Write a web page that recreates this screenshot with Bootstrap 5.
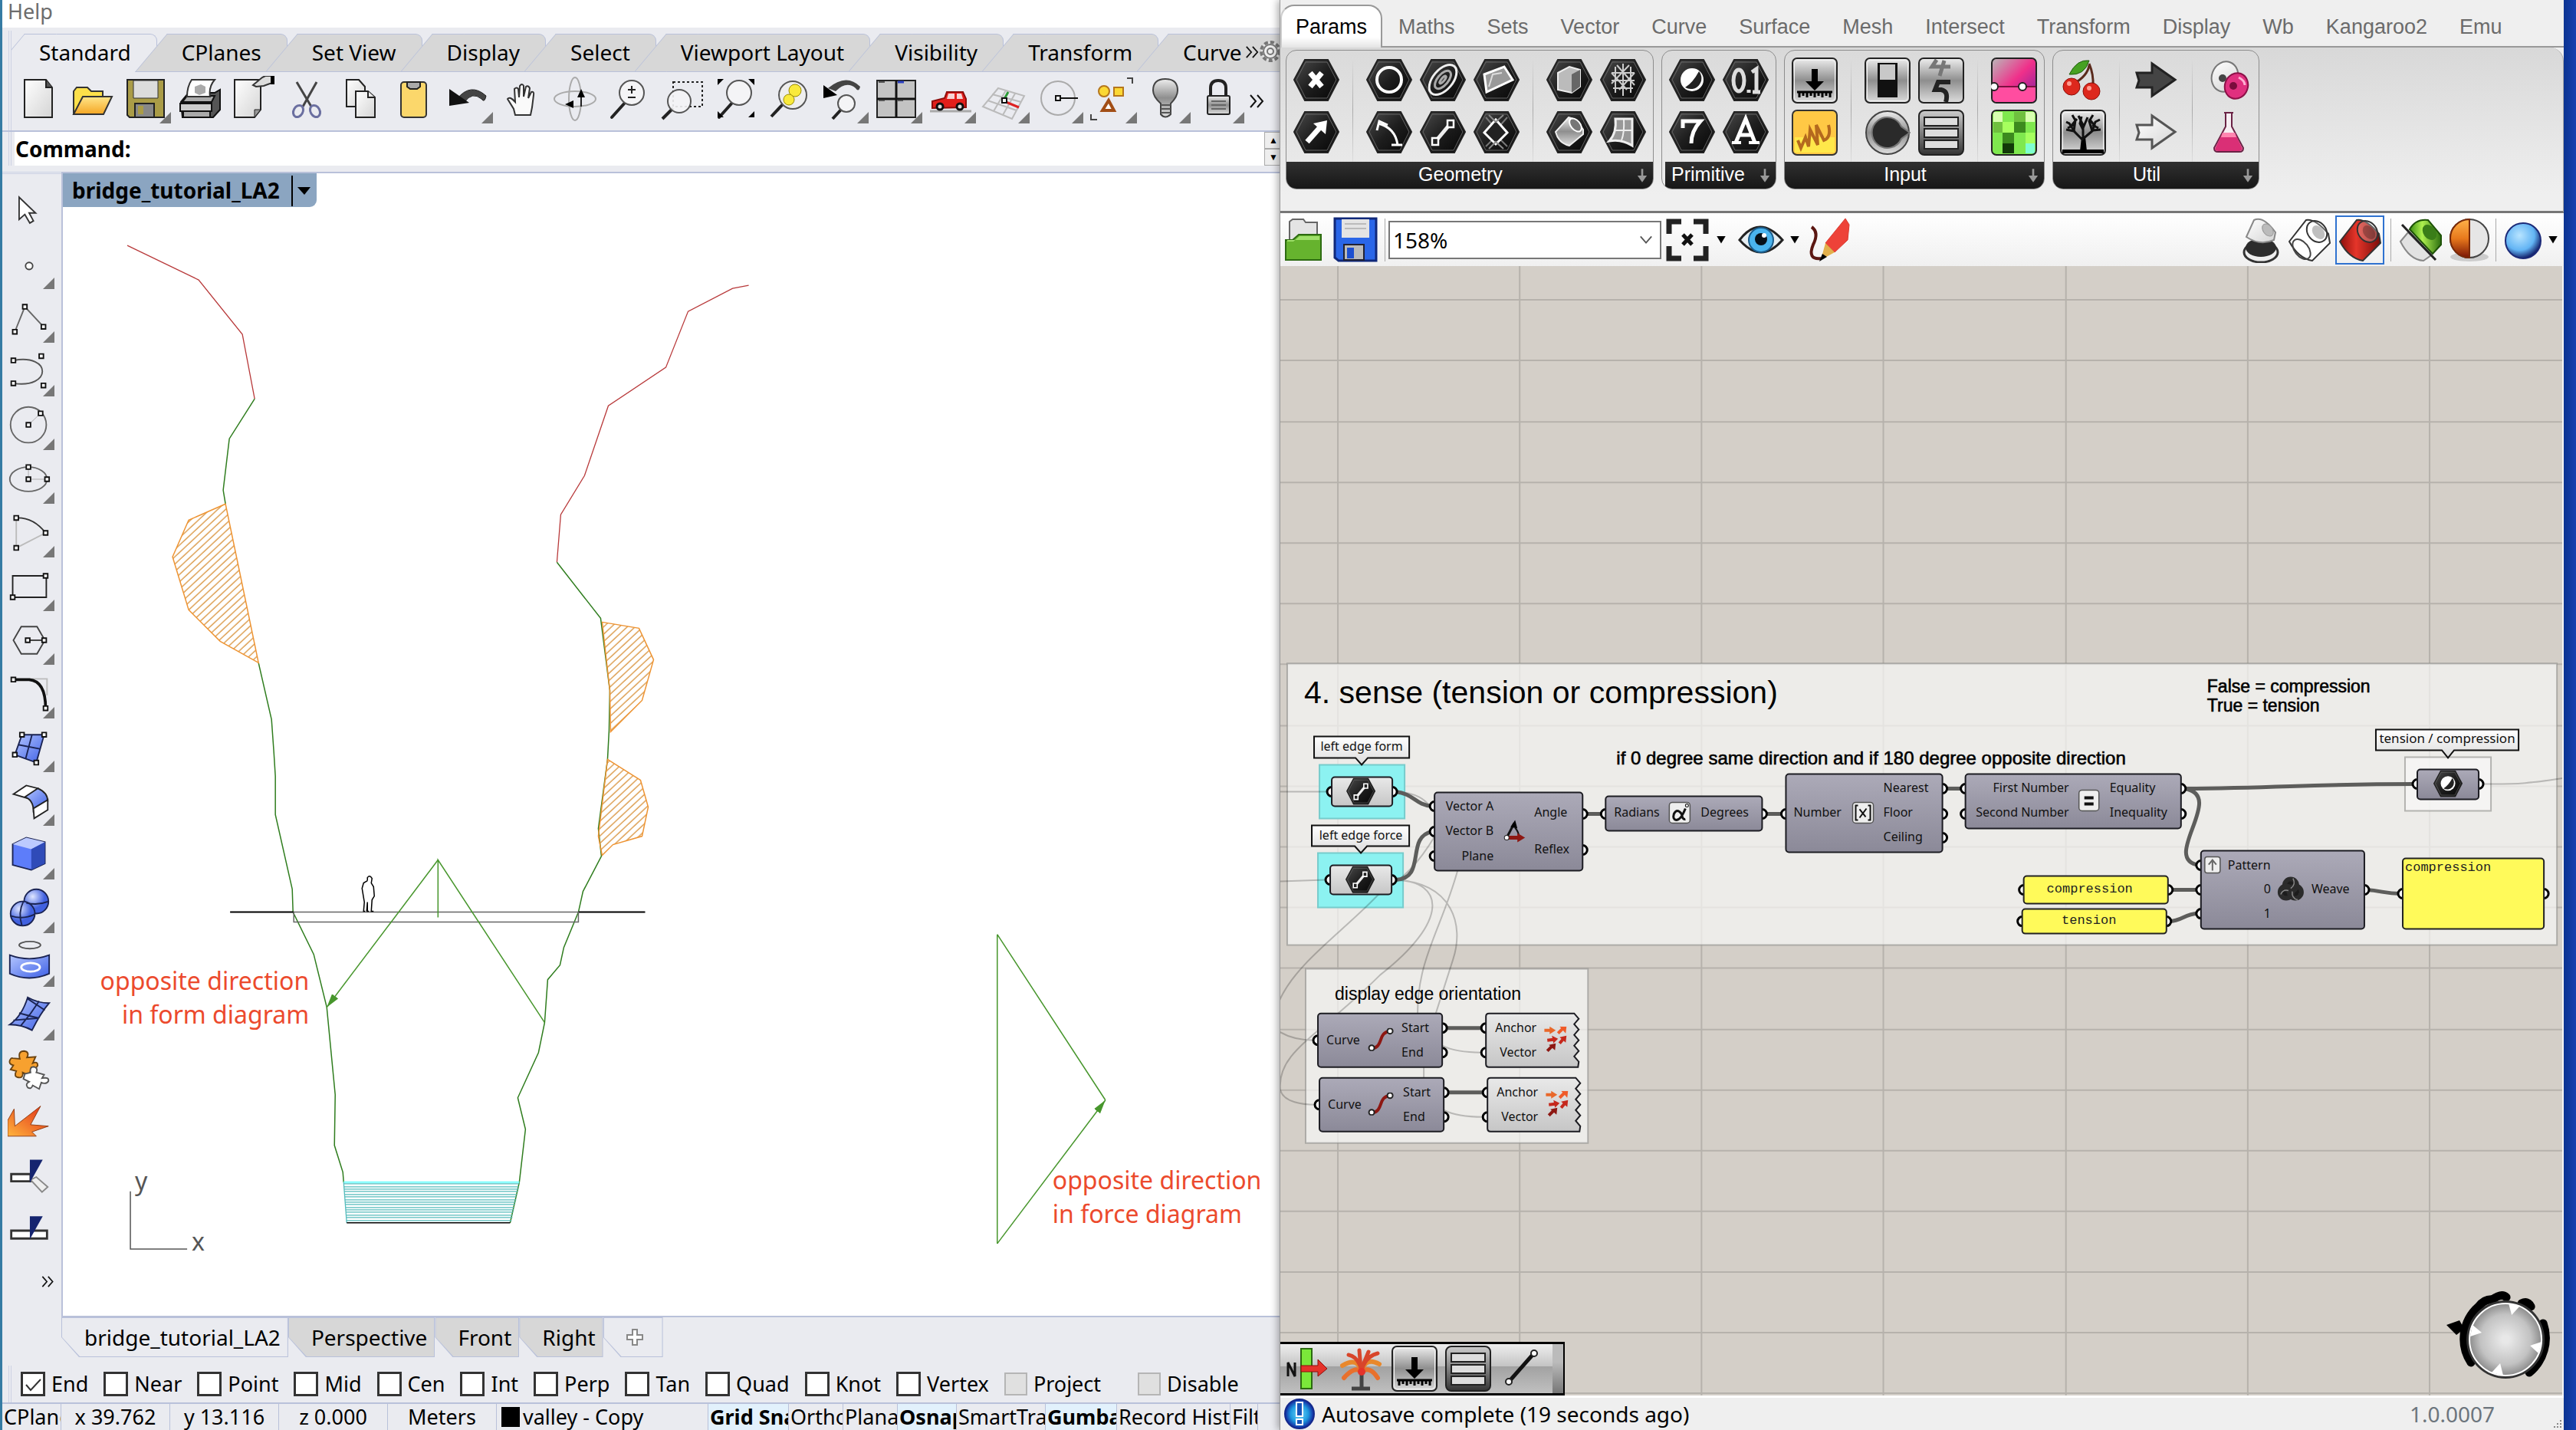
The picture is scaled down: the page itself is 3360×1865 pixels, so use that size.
<!DOCTYPE html>
<html lang="en">
<head>
<meta charset="utf-8">
<meta name="viewport" content="width=device-width, initial-scale=1">
<title>bridge_tutorial_LA2</title>
<link href="https://cdn.jsdelivr.net/npm/bootstrap@5.3.0/dist/css/bootstrap.min.css" rel="stylesheet">
<style>
:root{--pane:#eaebf0;--edge:#b9c1da;--tabgray:#d7d7d7}
body{font-family:"Noto Sans",sans-serif;font-size:27px;line-height:36px;color:#000;background:#fff}
button{font:inherit;color:inherit;background:none;border:0;padding:0}
svg{display:block}
.lhs{flex:1668 1 0;min-width:0;background:var(--pane);border-left:3px solid #357ba3}
.rhs{flex:1676 1 0;min-width:0;background:#efefef;z-index:2;box-shadow:-3px 0 9px rgba(0,0,0,.3);border-left:1px solid #999}
.desk{flex:0 0 16px;background:linear-gradient(90deg,#0b3391,#1741b0);z-index:3}
.menubar{height:36px;color:#6d6d6d;line-height:30px;padding-left:7px}
.menubar a{display:inline-block;height:36px}
.grip{width:4px;border:solid #ccd2e4;border-width:0 1px;margin-left:8px}
/* toolbar group tabs */
.grouptab{position:relative;z-index:0;height:50px;font-size:28px;margin-left:13px;padding:0 33px 2px 19px;white-space:nowrap;background:var(--tabgray);border:solid var(--edge);border-width:1px 1px 1px 0;border-radius:0 9px 0 0}
.grouptab::before{content:"";position:absolute;z-index:-1;left:-21px;top:-1px;bottom:-1px;width:42px;transform:skewX(-40deg);background:var(--tabgray);border:solid var(--edge);border-width:1px 0 1px 1px}
.grouptab.on{margin-left:17px}
.grouptab.on,.grouptab.on::before{background:var(--pane);border-bottom-color:var(--pane)}
.toolrow{height:76px}
.tool{position:relative;flex:0 0 70px;height:70px;display:flex;align-items:center;justify-content:center}
.tool svg{width:60px;height:60px}
.more::after{content:"";position:absolute;right:2px;bottom:3px;width:15px;height:15px;background:#777;clip-path:polygon(100% 0,100% 100%,0 100%)}
.cmd{height:46px;border-top:2px solid var(--edge)}
.cmd label{background:#fff;font-weight:700;padding:1px 0 0 1px;line-height:43px;font-size:28px}
.cmd input{border:0;outline:0;min-width:0}
.spin{width:20px}
.spin button{width:24px;height:22px;border:1px solid #aaa;background:#eee;font-size:12px;line-height:18px}
.side{width:77px;border-top:3px double #ccd2e4;padding-top:13px}
.side .tool{margin-right:7px}
.side .tool svg{width:56px;height:56px}
.view{border:solid var(--edge);border-width:2px 0 2px 2px;background:#fff}
.vtitle{position:absolute;left:0;top:0;height:44px;background:#8ba5c1;font-weight:700;border-radius:0 0 9px 0;font-size:28px;padding-left:12px}
.vtitle span+span{border-left:2px solid #000;margin:3px 0 1px 15px;padding:0 8px 0 6px}
.vtabs{padding-left:77px}
.vtab{height:52px;font-size:28px;position:relative;z-index:0;padding:0 10px 0 30px;background:var(--edge);clip-path:polygon(0 0,100% 0,100% 100%,23px 100%,0 26px)}
.vtab::before{content:"";position:absolute;z-index:-1;inset:1px;background:var(--tabgray);clip-path:polygon(0 0,100% 0,100% 100%,23px 100%,0 25px)}
.vtab.on::before{background:var(--pane)}
.snaps{height:59px;padding-top:11px}
.snaps .form-check-input{width:32px;height:32px;margin:0 8px 0 0;border:3px solid #333;border-radius:0;background-color:#fff;box-shadow:none;flex:none}
.snaps .form-check-input:checked{background-image:url("data:image/svg+xml,%3Csvg xmlns='http://www.w3.org/2000/svg' viewBox='0 0 26 26'%3E%3Cpath d='M4 14l6 7L23 7' fill='none' stroke='%23333' stroke-width='2'/%3E%3C/svg%3E")}
.snaps .form-check-input:disabled{width:30px;height:30px;border:2px solid #b5b5b5;background:#e0e0e0;opacity:1}
.snaps label{line-height:34px;margin-right:20px;opacity:1!important}
.stat{height:36px;border-top:2px solid var(--edge)}
.stat>*{overflow:hidden;white-space:nowrap;border-right:1px solid var(--edge);height:34px;line-height:34px;min-width:0;flex:none;padding:0 2px;text-align:left}
.stat .w1{width:142px;text-align:center;padding:0}
.stat .w2{width:276px}.stat .w3{width:105px}.stat .w4{width:71px}.stat .w5{width:77px}.stat .w6{width:116px}.stat .w7{width:93px}.stat .w8{width:148px}.stat .w9{width:36px}
.stat .lit{background:#e2f1fc;font-weight:700}
/* component ribbon */
.rib{font-family:"Liberation Sans",Arial,sans-serif;font-size:27px}
.rtabs{height:56px;margin-top:6px}
.rtabs button{padding:3px 21px 0;color:#6b6b6b;border-bottom:2px solid #999}
.rtabs .on{background:linear-gradient(#fff 75%,#e4e4e4);color:#000;border:2px solid #999;border-bottom:0;border-left-color:#ccc;border-radius:18px 18px 0 0;padding:0 18px}
.rbody{height:216px;background:linear-gradient(#d8d8d8,#efefef 90%);border-bottom:3px solid #777;border-right:1px solid #aaa;border-radius:0 18px 0 0;padding:3px 9px 0 7px;gap:10px}
.grp{border:1px solid #8d8d8d;border-radius:14px;height:182px;overflow:hidden;background:linear-gradient(#dadada,#ececec)}
.grp .cells{height:145px;padding:9px 9px 0;gap:10px}
.grp .cells svg{width:60px;height:60px}
.grp .rule{width:1px;margin:0 7px;background:linear-gradient(#ddd,#aaa,#ddd)}
.grp .foot{height:36px;background:linear-gradient(#303030,#161616);color:#fff;font-size:25px;line-height:32px;position:relative}
.grp .foot svg{position:absolute;right:7px;top:9px;width:14px;height:18px}
.bar{height:69px;background:linear-gradient(#fff,#f0f0f0)}
.bar button svg{width:60px;height:60px}
.bar .drop{width:12px;height:10px;background:#000;clip-path:polygon(0 0,100% 0,50% 100%)}
.bar .rule{width:1px;height:56px;background:#aaa}
.bar select{width:356px;height:50px;border:2px solid #777;border-radius:0;background:#fff;appearance:none;padding-left:4px;font-size:28px;line-height:44px}
.pickzoom svg{position:absolute;right:11px;top:18px;width:18px;height:13px}
.sel{border:2px solid #2f72d0;height:64px}
.canvas{background:#d4cfc8;min-height:0;border-right:2px solid #f4f4f4}
.dock{position:absolute;left:0;bottom:0;height:70px;border:solid #000;border-width:3px 2px 3px 0;background:linear-gradient(#eee,#c4c4c4 45%,#a2a2a2 46%,#c0c0c0);padding:0 0 0 5px;gap:10px}
.dock svg{width:60px;height:60px}
.dock .hold{width:14px;background:linear-gradient(#bbb 36%,#777)}
.foots{height:45px;border-top:3px solid #fff;font-size:28px}
svg .seg{font-family:"Noto Sans",sans-serif;font-size:16px;fill:#111}
svg .ari{font-family:"Liberation Sans",Arial,sans-serif;font-size:23px;fill:#000}
svg .mono{font-family:"Liberation Mono",monospace;font-size:17px;fill:#222}
svg .big{font-size:41px}
svg .wide{font-size:24px}
svg .s17{font-size:17px}
svg .emph{stroke:#000;stroke-width:.6}
svg .note{font-size:32px;fill:#ec4a2d}
svg .end{text-anchor:end}
svg .mid{text-anchor:middle}
.port{fill:#fff;stroke:#000;stroke-width:3}
.comp{fill:url(#gNode);stroke:#1c1c22;stroke-width:2}
.pale{fill:url(#gPale);stroke:#1c1c22;stroke-width:2}
.memo{fill:#fffa5a;stroke:#222;stroke-width:2}
.tag{fill:url(#gTag);stroke:#111;stroke-width:2}
.wire{fill:none;stroke:#5d5d5b;stroke-width:5}
.thin{fill:none;stroke:#000;stroke-opacity:.22;stroke-width:2}
</style>
<script src="https://cdn.jsdelivr.net/npm/bootstrap@5.3.0/dist/js/bootstrap.bundle.min.js"></script>
</head>
<body class="vh-100 d-flex overflow-hidden">
<svg width="0" height="0" class="position-absolute" aria-hidden="true">
<defs>
<linearGradient id="gNode" x2="0" y2="1"><stop stop-color="#acaab8"/><stop offset="1" stop-color="#8b8998"/></linearGradient>
<linearGradient id="gPale" x2="0" y2="1"><stop stop-color="#e9e9e9"/><stop offset="1" stop-color="#c6c6c6"/></linearGradient>
<linearGradient id="gTag" x2="0" y2="1"><stop stop-color="#fff"/><stop offset="1" stop-color="#dcdcdc"/></linearGradient>
<linearGradient id="gPaper" x2="1" y2="1"><stop stop-color="#fff"/><stop offset="1" stop-color="#d4d4d4"/></linearGradient>
<linearGradient id="gBlk" x2="1" y2="1"><stop stop-color="#4c4c4c"/><stop offset=".5" stop-color="#1e1e1e"/><stop offset="1" stop-color="#050505"/></linearGradient>
<linearGradient id="gMet" x2="0" y2="1"><stop stop-color="#eee"/><stop offset=".5" stop-color="#8e8e8e"/><stop offset="1" stop-color="#ddd"/></linearGradient>
<linearGradient id="gDark" x2="0" y2="1"><stop stop-color="#ccc"/><stop offset="1" stop-color="#333"/></linearGradient>
<linearGradient id="gYel" x2="0" y2="1"><stop stop-color="#ffe68a"/><stop offset="1" stop-color="#f5a623"/></linearGradient>
<linearGradient id="gBlu" x2="1" y2="1"><stop stop-color="#b4c6ff"/><stop offset="1" stop-color="#3e60e6"/></linearGradient>
<linearGradient id="gRed" x2="1"><stop stop-color="#8c0f0c"/><stop offset=".4" stop-color="#e5352a"/><stop offset="1" stop-color="#7a0c0a"/></linearGradient>
<linearGradient id="gGrn" x2="1"><stop stop-color="#3b8f12"/><stop offset=".4" stop-color="#aef04f"/><stop offset="1" stop-color="#2d6f10"/></linearGradient>
<linearGradient id="gFire" x1="0" y1="1" x2="1" y2="0"><stop stop-color="#ffb43c"/><stop offset="1" stop-color="#e02a17"/></linearGradient>
<linearGradient id="gHalf" x2="0" y2="1"><stop stop-color="#ffb24a"/><stop offset=".5" stop-color="#e8791c"/><stop offset="1" stop-color="#7a1505"/></linearGradient>
<radialGradient id="gSph" cx=".35" cy=".3"><stop stop-color="#dfe6ff"/><stop offset="1" stop-color="#4161e0"/></radialGradient>
<radialGradient id="gSky" cx=".4" cy=".35" r=".65"><stop stop-color="#b8e4ff"/><stop offset=".65" stop-color="#62b4f4"/><stop offset="1" stop-color="#14246e"/></radialGradient>
<radialGradient id="gDial"><stop offset=".1" stop-color="#e8e8e8"/><stop offset=".7" stop-color="#c2c2c2"/><stop offset="1" stop-color="#8c8c8c"/></radialGradient>
<radialGradient id="gInfo"><stop stop-color="#6fd6f8"/><stop offset=".6" stop-color="#1f9be0"/><stop offset="1" stop-color="#13239c"/></radialGradient>
<linearGradient id="gPink" x2="1" y2="1"><stop stop-color="#b9b9b9"/><stop offset=".5" stop-color="#f0308a"/><stop offset="1" stop-color="#7b1fa2"/></linearGradient>
<pattern id="hatchA" width="8" height="7" patternUnits="userSpaceOnUse" patternTransform="rotate(-43)"><path d="M0 1h8" stroke="#d8913a" stroke-width="1.3"/></pattern>
<marker id="tip" markerWidth="20" markerHeight="12" refX="18" refY="6" orient="auto" markerUnits="userSpaceOnUse"><path d="M0 1L18 6L0 11z" fill="#47962c"/></marker>
<symbol id="hex" viewBox="0 0 60 60"><path d="M15 3H45L59 29L45 56H15L1 29z" fill="url(#gBlk)" stroke="#222" stroke-width="2"/><path d="M16 6H44L56 29L44 53H16L4 29z" fill="none" stroke="#666"/></symbol>
<symbol id="boxm" viewBox="0 0 60 60"><rect x="1" y="1" width="58" height="58" rx="6" fill="url(#gMet)" stroke="#222" stroke-width="2"/><rect x="3.500" y="3.500" width="53" height="53" rx="4" fill="none" stroke="#f4f4f4"/></symbol>
<symbol id="slider" viewBox="0 0 60 60"><use href="#boxm"/><path d="M26 15h8v16h8L30 43L18 31h8z"/><path d="M7 45H53M10 45v7M15 45v5M20 45v7M25 45v5M30 45v7M35 45v5M40 45v7M45 45v5M50 45v7" stroke="#000" stroke-width="3"/></symbol>
<symbol id="vlist" viewBox="0 0 60 60"><rect x="1" y="1" width="58" height="58" rx="7" fill="url(#gDark)" stroke="#222" stroke-width="2"/><g fill="#ddd" stroke="#222" stroke-width="2"><rect x="8" y="10" width="44" height="11"/><rect x="8" y="25" width="44" height="11"/><rect x="8" y="40" width="44" height="11"/></g></symbol>
<symbol id="lens" viewBox="0 0 60 60"><path d="M26 34L8 54" stroke="#222" stroke-width="4" stroke-linecap="round"/><circle cx="34" cy="22" r="16" fill="#f4f4f6" stroke="#555" stroke-width="2"/></symbol>
<symbol id="dn" viewBox="0 0 16 20"><path d="M8 0v15" stroke="#999" stroke-width="3"/><path d="M1 10H15L8 20z" fill="#999"/></symbol>
<symbol id="chev" viewBox="0 0 20 18"><path d="M2 1L9 9L2 17M11 1L18 9L11 17" fill="none" stroke="#111" stroke-width="2"/></symbol>
<symbol id="lineic" viewBox="0 0 60 60"><use href="#hex"/><path d="M20 42L40 18" stroke="#eee" stroke-width="5"/><path d="M16 37h8v9h-8zM36 14h8v9h-8z" fill="#222" stroke="#fff" stroke-width="2.500"/></symbol>
<symbol id="boolic" viewBox="0 0 60 60"><use href="#hex"/><circle cx="30" cy="29" r="15" fill="#fff"/><path d="M39 18A14 14 0 0 1 21 39q10-6 18-21z" fill="#222"/></symbol>
<symbol id="cyl" viewBox="0 0 60 60"><path d="M26 4Q38 2 55 22L57 34L34 57Q16 54 4 32z" stroke="#333" stroke-width="2"/><ellipse cx="40" cy="19" rx="12" ry="15" transform="rotate(-38 40 19)" fill="#fff" fill-opacity=".25" stroke="#333" stroke-width="2"/><ellipse cx="42" cy="20" rx="7" ry="10" transform="rotate(-38 42 20)" fill="#000" fill-opacity=".25"/></symbol>
<symbol id="curveic" viewBox="0 0 34 30"><path d="M5 27C22 24 12 6 29 4" fill="none" stroke="#8d1712" stroke-width="4"/><circle cx="5" cy="26" r="3.500" fill="#fff" stroke="#222" stroke-width="2"/><circle cx="29" cy="4" r="3.500" fill="#fff" stroke="#222" stroke-width="2"/></symbol>
<symbol id="vecic" viewBox="0 0 34 36"><g stroke-width="4" fill="none"><path d="M0 5h8" stroke="#e9682a"/><path d="M18 9l6-6" stroke="#f05a28"/><path d="M4 18l8-1M20 22l5-6" stroke="#c5281c"/><path d="M4 32l6-6" stroke="#8d1712"/></g><path d="M7 0l8 5l-8 5z" fill="#e9682a"/><path d="M20 0h9l-1 9z" fill="#f05a28"/><path d="M10 12l8 4l-6 6zM20 14l9-2l-1 9z" fill="#c5281c"/><path d="M6 24l9-2l-1 9z" fill="#8d1712"/></symbol>
</defs></svg>

<!-- modelling window -->
<main class="lhs d-flex flex-column overflow-hidden">
<nav class="menubar bg-white"><a href="#" class="text-reset text-decoration-none">Help</a></nav>
<div class="d-flex pt-1">
<div class="grip"></div>
<div class="flex-grow-1 overflow-hidden">
<div class="d-flex pt-1 position-relative">
<button class="grouptab on">Standard</button><button class="grouptab">CPlanes</button><button class="grouptab">Set View</button><button class="grouptab">Display</button><button class="grouptab">Select</button><button class="grouptab">Viewport Layout</button><button class="grouptab">Visibility</button><button class="grouptab">Transform</button><button class="grouptab pe-0 border-end-0 rounded-0 flex-grow-1 d-flex align-items-center">Curve<svg class="ms-1" width="18" height="18"><use href="#chev"/></svg></button>
<svg class="position-absolute end-0 top-50 translate-middle-y" width="29" height="34" viewBox="0 0 29 34"><circle cx="17" cy="17" r="12" fill="#e4e4e4" stroke="#777" stroke-width="4" stroke-dasharray="5 3"/><circle cx="17" cy="17" r="9" fill="#eee" stroke="#777" stroke-width="2"/><circle cx="17" cy="17" r="4" fill="none" stroke="#777" stroke-width="2"/></svg>
</div>
<div class="toolrow d-flex">
<button class="tool" aria-label="New"><svg viewBox="0 0 60 60"><path d="M12 5H40L48 15V54H12z" fill="url(#gPaper)" stroke="#222" stroke-width="2"/><path d="M40 5V15H48" fill="#555" stroke="#222" stroke-width="2"/></svg></button>
<button class="tool" aria-label="Open"><svg viewBox="0 0 60 60"><path d="M6 20L10 15H24L29 20H44V30H18L8 50H6z" fill="#fde04a" stroke="#333" stroke-width="2"/><path d="M18 27H56L45 50H6z" fill="url(#gYel)" stroke="#333" stroke-width="2"/></svg></button>
<button class="tool more" aria-label="Save"><svg viewBox="0 0 60 60"><path d="M6 5H54V54H9L6 51z" fill="#aa9c47" stroke="#222" stroke-width="2"/><path d="M14 6H46V29H14z" fill="#dcdcdc" stroke="#333"/><path d="M16 36H41V54H16z" fill="#888" stroke="#222" stroke-width="2"/><path d="M20 39h7v11h-7z" fill="#aa9c47"/></svg></button>
<button class="tool" aria-label="Print"><svg viewBox="0 0 60 60"><path d="M6 34L16 22H50L57 18V44L48 54H8z" fill="#555" stroke="#111" stroke-width="2"/><path d="M5 36H46V46H5z" fill="#ccc" stroke="#111" stroke-width="2"/><path d="M9 46H44V54H9zM14 26H50L46 34H8z" fill="#aaa" stroke="#111" stroke-width="2"/><path d="M20 5H50Q42 14 44 27H14Q14 14 20 5z" fill="#fff" stroke="#333" stroke-width="2"/><path d="M24 14l8-3l6 3v8l-8 3l-6-3z" fill="#aaa"/></svg></button>
<button class="tool" aria-label="Document properties"><svg viewBox="0 0 60 60"><path d="M6 5H40V44L32 54H6z" fill="url(#gPaper)" stroke="#222" stroke-width="2"/><path d="M32 54V44H40z" fill="#999" stroke="#222"/><path d="M30 12L42 2L46 0H57V10H52L44 13L34 14z" fill="#ddd" stroke="#333" stroke-width="2"/><path d="M53 0h5v11h-5z"/></svg></button>
<button class="tool" aria-label="Cut"><svg viewBox="0 0 60 60"><path d="M17 8L36 40M43 8L25 40" stroke="#444" stroke-width="3"/><g fill="none" stroke="#6b6fa0" stroke-width="3"><ellipse cx="19" cy="46" rx="6" ry="8" transform="rotate(30 19 46)"/><ellipse cx="41" cy="46" rx="6" ry="8" transform="rotate(-30 41 46)"/></g></svg></button>
<button class="tool" aria-label="Copy"><svg viewBox="0 0 60 60"><g fill="url(#gPaper)" stroke="#222" stroke-width="2"><path d="M12 5H28L36 14V40H12z"/><path d="M24 20H40L49 28V54H24z"/><path d="M40 20V28H49"/></g></svg></button>
<button class="tool" aria-label="Paste"><svg viewBox="0 0 60 60"><rect x="13" y="8" width="33" height="46" rx="4" fill="#fbd76b" stroke="#333" stroke-width="2"/><path d="M21 8H38V14L34 17H25L21 14z" fill="#aaa" stroke="#222" stroke-width="2"/></svg></button>
<button class="tool more" aria-label="Undo"><svg viewBox="0 0 60 60"><path d="M16 30Q34 8 54 26Q52 36 48 30Q36 20 26 34z" fill="#444" stroke="#222"/><path d="M6 17L6 39L32 35z" fill="#111"/></svg></button>
<button class="tool" aria-label="Pan"><svg viewBox="0 0 60 60"><path d="M22 51L20 43L12 30Q15 26 22 34L21 17Q24 14 26 17L27 28L28 13Q31 9 33 13L33 27L36 14Q39 12 41 16L39 29L43 21Q47 20 46 25L44 41L42 51z" fill="#fafafa" stroke="#333" stroke-width="2"/></svg></button>
<button class="tool" aria-label="Rotate view"><svg viewBox="0 0 60 60"><g fill="none" stroke="#aaa" stroke-width="2"><ellipse cx="30" cy="30" rx="27" ry="10"/><ellipse cx="30" cy="30" rx="8" ry="28"/></g><path d="M38 40V26" stroke="#222" stroke-width="2"/><path d="M33 28l5-11l5 11zM28 32V42L17 37z"/></svg></button>
<button class="tool" aria-label="Zoom dynamic"><svg viewBox="0 0 60 60"><use href="#lens"/><path d="M34 13V23M29 18H39M29 28H39" stroke="#222" stroke-width="2"/></svg></button>
<button class="tool" aria-label="Zoom window"><svg viewBox="0 0 60 60"><path d="M18 8H56V40H18z" fill="none" stroke="#222" stroke-width="2" stroke-dasharray="3 3"/><path d="M18 42L4 56" stroke="#222" stroke-width="4"/><circle cx="26" cy="33" r="15" fill="#f4f4f6" fill-opacity=".9" stroke="#555" stroke-width="2"/></svg></button>
<button class="tool" aria-label="Zoom extents"><svg viewBox="0 0 60 60"><use href="#lens"/><path d="M6 4h8l-8 8zM54 4v8l-8-8zM6 54v-8l8 8zM54 54h-8l8-8z"/></svg></button>
<button class="tool" aria-label="Zoom selected"><svg viewBox="0 0 60 60"><path d="M22 36L6 53" stroke="#222" stroke-width="4"/><circle cx="34" cy="25" r="18" fill="#eee" stroke="#555" stroke-width="2"/><circle cx="37" cy="19" r="8" fill="#f9ea3c" stroke="#998a00"/><circle cx="29" cy="31" r="7" fill="#f9ea3c" stroke="#998a00"/></svg></button>
<button class="tool more" aria-label="Undo view"><svg viewBox="0 0 60 60"><path d="M10 16Q34-4 52 14Q50 22 46 16Q34 6 20 20z" fill="#444"/><path d="M4 12L4 29L22 25z"/><path d="M27 44L16 56" stroke="#222" stroke-width="4"/><circle cx="34" cy="36" r="11" fill="#f4f4f6" stroke="#555" stroke-width="2"/></svg></button>
<button class="tool more" aria-label="Four views"><svg viewBox="0 0 60 60"><path d="M4 6H54V54H4z" fill="#c3c3c3" stroke="#222" stroke-width="2"/><path d="M29 6V54M4 30H54" stroke="#111" stroke-width="3"/><path d="M6 8h8M30 32h8M6 32h8" stroke="#555" stroke-width="2"/><path d="M31 8h8" stroke="#2a3fc0" stroke-width="3"/></svg></button>
<button class="tool more" aria-label="Set view"><svg viewBox="0 0 60 60"><path d="M3 46H57" stroke="#aaa" stroke-width="3"/><path d="M6 42V33L22 29L25 21H46L50 30V41z" fill="#e31f1b" stroke="#8e0d0b" stroke-width="2"/><path d="M27 23H35V30H25zM38 23H44L46 30H38z" fill="#f6d5d5"/><g fill="#ddd" stroke="#111" stroke-width="3"><circle cx="16" cy="40" r="4"/><circle cx="42" cy="40" r="4"/></g></svg></button>
<button class="tool more" aria-label="CPlane"><svg viewBox="0 0 60 60"><path d="M22 16L56 26L40 56L2 40zM14 24L52 34M8 32L46 45M32 19L16 46M44 23L28 51" fill="none" stroke="#bbb" stroke-width="2"/><path d="M30 30L35 21" stroke="#2a9a35" stroke-width="3"/><path d="M32 34L49 41" stroke="#d22" stroke-width="3"/><path d="M27 29h6v6h-6z" fill="#fff" stroke="#111" stroke-width="2"/></svg></button>
<button class="tool more" aria-label="Object snap"><svg viewBox="0 0 60 60"><circle cx="30" cy="29" r="22" fill="none" stroke="#aaa" stroke-width="2"/><path d="M30 29H56" stroke="#111" stroke-width="2"/><path d="M27 26h6v6h-6z" fill="#fff" stroke="#111" stroke-width="2"/></svg></button>
<button class="tool more" aria-label="Select"><svg viewBox="0 0 60 60"><path d="M50 3h7v7M3 50v7h8" fill="none" stroke="#444" stroke-width="2"/><circle cx="20" cy="20" r="7" fill="#fbd834" stroke="#b5761c" stroke-width="2"/><path d="M33 15H45V26H33z" fill="#fbd834" stroke="#b5761c" stroke-width="2"/><path d="M26 32L33 45H18z" fill="#fff" stroke="#a24e16" stroke-width="4"/></svg></button>
<button class="tool more" aria-label="Hide"><svg viewBox="0 0 60 60"><path d="M30 4Q46 4 46 19Q46 27 37 36V50Q30 57 24 50V36Q14 27 14 19Q14 4 30 4z" fill="url(#gMet)" stroke="#444" stroke-width="2"/><path d="M24 38h13M24 43h13M24 48h13" stroke="#555" stroke-width="2"/></svg></button>
<button class="tool more" aria-label="Lock"><svg viewBox="0 0 60 60"><path d="M19 28V16Q19 6 29 6Q39 6 39 16V28" fill="none" stroke="#222" stroke-width="4"/><rect x="15" y="26" width="29" height="24" rx="2" fill="url(#gMet)" stroke="#222" stroke-width="2"/><path d="M20 33H39M20 38H39M20 43H39" stroke="#666" stroke-width="2"/></svg></button>
<button class="ps-1" aria-label="More tools"><svg width="20" height="18"><use href="#chev"/></svg></button>
</div></div></div>
<div class="cmd d-flex">
<div class="grip me-1"></div>
<label for="cmd">Command:</label><input id="cmd" class="flex-grow-1 bg-white">
<div class="spin bg-white d-flex flex-column overflow-hidden flex-shrink-0"><button aria-label="Up">▲</button><button aria-label="Down">▼</button></div>
</div>
<div class="d-flex flex-grow-1 pt-2 overflow-hidden">
<div class="side d-flex flex-column flex-shrink-0">
<button class="tool" aria-label="Pointer"><svg viewBox="0 0 60 60"><path d="M16 11V42L24 35L31 47L36 44L30 33H39z" fill="#fff" stroke="#333" stroke-width="2"/></svg></button>
<button class="tool more" aria-label="Point"><svg viewBox="0 0 60 60"><circle cx="30" cy="32" r="5" fill="#fff" stroke="#444" stroke-width="2"/></svg></button>
<button class="tool more" aria-label="Polyline"><svg viewBox="0 0 60 60"><path d="M10 49L24 14L50 42" fill="none" stroke="#666" stroke-width="2"/><path d="M7 46h6v6h-6zM21 11h6v6h-6zM47 39h6v6h-6z" fill="#fff" stroke="#111" stroke-width="2"/></svg></button>
<button class="tool more" aria-label="Curve"><svg viewBox="0 0 60 60"><path d="M8 14C62 4 62 54 8 46" fill="none" stroke="#555" stroke-width="2"/><path d="M5 11h6v6h-6zM5 43h6v6h-6zM44 5h6v6h-6zM47 46h6v6h-6z" fill="#fff" stroke="#111" stroke-width="2"/></svg></button>
<button class="tool more" aria-label="Circle"><svg viewBox="0 0 60 60"><circle cx="29" cy="29" r="25" fill="none" stroke="#666" stroke-width="2"/><path d="M29 29L46 13" stroke="#aaa"/><path d="M26 26h6v6h-6zM43 10h6v6h-6z" fill="#fff" stroke="#111" stroke-width="2"/></svg></button>
<button class="tool more" aria-label="Ellipse"><svg viewBox="0 0 60 60"><ellipse cx="29" cy="30" rx="26" ry="17" fill="none" stroke="#666" stroke-width="2"/><path d="M29 13V30H55" fill="none" stroke="#aaa"/><path d="M26 27h6v6h-6zM26 10h6v6h-6zM52 27h6v6h-6z" fill="#fff" stroke="#111" stroke-width="2"/></svg></button>
<button class="tool more" aria-label="Arc"><svg viewBox="0 0 60 60"><path d="M12 9V51L53 30" fill="none" stroke="#bbb" stroke-width="2"/><path d="M12 9Q36 8 53 30" fill="none" stroke="#333" stroke-width="2"/><path d="M9 6h6v6h-6zM9 48h6v6h-6zM50 27h6v6h-6z" fill="#fff" stroke="#111" stroke-width="2"/></svg></button>
<button class="tool more" aria-label="Rectangle"><svg viewBox="0 0 60 60"><path d="M7 15H54V45H7z" fill="none" stroke="#222" stroke-width="2"/><path d="M4 42h6v6h-6zM50 12h6v6h-6z" fill="#fff" stroke="#111" stroke-width="2"/></svg></button>
<button class="tool more" aria-label="Polygon"><svg viewBox="0 0 60 60"><path d="M19 11H41L52 30L41 49H19L8 30zM28 30H50" fill="none" stroke="#444" stroke-width="2"/><path d="M25 27h6v6h-6zM48 27h6v6h-6z" fill="#fff" stroke="#111" stroke-width="2"/></svg></button>
<button class="tool more" aria-label="Fillet"><svg viewBox="0 0 60 60"><path d="M30 9H55V32" fill="none" stroke="#bbb" stroke-width="2"/><path d="M8 10H30Q53 12 53 50" fill="none" stroke="#111" stroke-width="4"/><path d="M5 7h6v6h-6zM50 47h6v6h-6z" fill="#fff" stroke="#111" stroke-width="2"/></svg></button>
<button class="tool more" aria-label="Surface"><svg viewBox="0 0 60 60"><path d="M20 12H51L40 51L10 40zM34 12L25 46M15 26L46 32" fill="url(#gBlu)" stroke="#1a2352" stroke-width="2"/><path d="M17 9h6v6h-6zM48 9h6v6h-6zM37 48h6v6h-6zM7 37h6v6h-6z" fill="#fff" stroke="#111" stroke-width="2"/></svg></button>
<button class="tool more" aria-label="Blend surface"><svg viewBox="0 0 60 60"><path d="M8 20L26 8L42 12L28 26z" fill="#fff" stroke="#222" stroke-width="2"/><path d="M42 12Q56 18 56 30L36 44Q36 28 24 24z" fill="url(#gBlu)" stroke="#222" stroke-width="2"/><path d="M36 40L56 28V42L37 54z" fill="#fff" stroke="#222" stroke-width="2"/></svg></button>
<button class="tool more" aria-label="Box"><svg viewBox="0 0 60 60"><path d="M7 15L26 6L52 12V42L33 51L7 44z" fill="#5d7dfa" stroke="#1a2352" stroke-width="2"/><path d="M7 15L26 6L52 12L33 22z" fill="#bccaff"/><path d="M33 22L52 12V42L33 51z" fill="#2f4bb8"/></svg></button>
<button class="tool more" aria-label="Spheres"><svg viewBox="0 0 60 60"><g fill="url(#gSph)" stroke="#1a2352" stroke-width="2"><circle cx="40" cy="20" r="17"/><circle cx="21" cy="37" r="17"/></g><path d="M4 40Q21 46 38 38M22 20Q14 36 20 54M26 22Q42 26 57 20" fill="none" stroke="#1a2352" stroke-width="2"/></svg></button>
<button class="tool more" aria-label="Project"><svg viewBox="0 0 60 60"><ellipse cx="31" cy="6" rx="15" ry="5" fill="none" stroke="#555" stroke-width="2"/><path d="M3 20Q30 30 58 20V46Q30 58 3 46z" fill="url(#gBlu)" stroke="#1a2352" stroke-width="2"/><ellipse cx="32" cy="37" rx="13" ry="6" fill="none" stroke="#fff" stroke-width="3"/></svg></button>
<button class="tool more" aria-label="Mesh"><svg viewBox="0 0 60 60"><path d="M28 4Q42 12 58 12Q46 26 34 50Q20 42 3 42Q20 30 28 4zM16 26Q30 30 44 33M44 9Q32 28 18 44M8 36L44 33M28 6L52 22" fill="url(#gBlu)" stroke="#1a2352" stroke-width="2"/></svg></button>
<button class="tool" aria-label="Join"><svg viewBox="0 0 60 60"><path d="M7 14L17 15Q14 4 23 4Q31 5 27 13L39 12L35 21Q42 18 42 24Q40 30 33 27L30 38L21 34Q22 42 15 41Q8 40 12 32L4 30L8 24Q1 22 3 17Q5 13 7 14z" fill="#f7a12f" stroke="#6b4310" stroke-width="2"/><path d="M24 36L32 34Q30 26 37 26Q43 28 40 34L51 37L48 42Q58 40 57 46Q54 51 47 48L44 57L35 52Q33 58 28 55Q24 50 30 47L22 43z" fill="#fff" stroke="#555" stroke-width="2"/></svg></button>
<button class="tool" aria-label="Explode"><svg viewBox="0 0 60 60"><path d="M0 26L9 10L10 34L46 6L32 32L57 34L34 42L40 48H0z" fill="url(#gFire)" stroke="#8d3a10" stroke-width="1"/></svg></button>
<button class="tool" aria-label="Trim"><svg viewBox="0 0 60 60"><path d="M5 26H32V36H5z" fill="#fff" stroke="#333" stroke-width="3"/><path d="M32 34L40 30L56 44L48 51z" fill="#eee" stroke="#888" stroke-width="2"/><path d="M31 6H49L31 38z" fill="#15246f"/></svg></button>
<button class="tool" aria-label="Split"><svg viewBox="0 0 60 60"><path d="M5 30H55V41H5z" fill="#fff" stroke="#333" stroke-width="3"/><path d="M31 10H49L31 42z" fill="#15246f"/></svg></button>
<button class="align-self-end pe-2 pt-4" aria-label="More"><svg width="20" height="15"><use href="#chev"/></svg></button>
</div>
<section class="view position-relative flex-grow-1 overflow-hidden">
<svg width="100%" height="100%" viewBox="83 226 1586 1492" preserveAspectRatio="xMinYMin slice" fill="none">
<g stroke="#b8393a" stroke-width="1.300"><path d="M167 320L260 365L317 436L333 520M977 372L956 376L898 406L869 479L794 529L763 620L732 671L727 733"/></g>
<g stroke="#2f7d1e" stroke-width="1.500"><path d="M333 520L300 572L292 639L295 657M338 864L355 938L358 980L360 1012L360 1062L382 1159L383 1189L410 1244L427 1313L438 1427L437 1493L448 1528L449 1541M727 733L784 806L796 900L795 952L793 990L781 1080L785 1116L761 1162L755 1189L736 1235L731 1258L715 1277L711 1333L703 1372L676 1431L686 1472L678 1541L666 1594"/></g>
<g stroke="#ee9433" stroke-width="1.500" fill="url(#hatchA)"><path d="M295 657L247 678L226 726L247 795L288 836L338 864z"/><path d="M786 811L834 819L853 860L838 913L797 954L796 900z"/><path d="M793 990L836 1017L846 1052L838 1090L800 1101L786 1115L781 1090z"/></g>
<path d="M301 1189H384M755 1189H842" stroke="#000" stroke-width="2"/><path d="M384 1189H755V1202H384z" stroke="#666" stroke-width="1.500"/>
<g stroke="#47962c" stroke-width="1.500"><path d="M711 1333L572 1121V1196"/><path d="M572 1121L427 1313" marker-end="url(#tip)"/><path d="M1301 1218L1442 1434M1301 1218V1621"/><path d="M1301 1621L1442 1434" marker-end="url(#tip)"/></g>
<path d="M480 1148V1144Q483 1140 486 1145L485 1151L488 1156L489 1168L486 1173L485 1188H488M480 1148L475 1151L473 1158L476 1176L475 1188H477M479 1188L480 1176V1188H482" stroke="#000" stroke-width="1.500"/>
<path d="M449 1541H678" stroke="#7ff" stroke-width="2"/>
<path d="M449 1543H678M449 1547H677M450 1550H677M450 1553H676M450 1557H675M450 1560H674M450 1564H674M451 1567H673M451 1570H672M451 1574H671M451 1577H671M452 1580H670M452 1584H669M452 1587H669M452 1591H668M449 1541L453 1594" stroke="#55bcbc" stroke-width="1.300"/>
<path d="M453 1594H666" stroke="#000" stroke-width="1.500"/>
<path d="M171 1553V1628H245" stroke="#555" stroke-width="1.500"/>
<text x="177" y="1551" font-size="32" fill="#555">y</text><text x="251" y="1630" font-size="32" fill="#555">x</text>
<text class="note end" x="404" y="1290">opposite direction</text><text class="note end" x="404" y="1334">in form diagram</text>
<text class="note" x="1373" y="1550">opposite direction</text><text class="note" x="1373" y="1594">in force diagram</text>
</svg>
<button class="vtitle d-flex align-items-stretch"><span class="align-self-center">bridge_tutorial_LA2</span><span class="d-flex align-items-center"><svg width="17" height="10"><path d="M0 0H17L9 10z"/></svg></span></button>
</section>
</div>
<div class="vtabs d-flex flex-shrink-0">
<button class="vtab on">bridge_tutorial_LA2</button><button class="vtab">Perspective</button><button class="vtab">Front</button><button class="vtab">Right</button><button class="vtab on" aria-label="Add view"><svg width="22" height="22" viewBox="0 0 22 22" class="me-3"><path d="M8 1h6v7h7v6h-7v7H8v-7H1V8h7z" fill="#fff" stroke="#888" stroke-width="2"/></svg></button>
</div>
<div class="snaps d-flex align-items-center flex-shrink-0">
<div class="grip align-self-stretch me-1"></div><div class="ms-2 d-flex align-items-center">
<input class="form-check-input" type="checkbox" id="s1" checked><label for="s1">End</label>
<input class="form-check-input" type="checkbox" id="s2"><label for="s2">Near</label>
<input class="form-check-input" type="checkbox" id="s3"><label for="s3">Point</label>
<input class="form-check-input" type="checkbox" id="s4"><label for="s4">Mid</label>
<input class="form-check-input" type="checkbox" id="s5"><label for="s5">Cen</label>
<input class="form-check-input" type="checkbox" id="s6"><label for="s6">Int</label>
<input class="form-check-input" type="checkbox" id="s7"><label for="s7">Perp</label>
<input class="form-check-input" type="checkbox" id="s8"><label for="s8">Tan</label>
<input class="form-check-input" type="checkbox" id="s9"><label for="s9">Quad</label>
<input class="form-check-input" type="checkbox" id="s10"><label for="s10">Knot</label>
<input class="form-check-input" type="checkbox" id="s11"><label for="s11">Vertex</label>
<input class="form-check-input" type="checkbox" id="s12" disabled><label for="s12" class="me-5">Project</label>
<input class="form-check-input" type="checkbox" id="s13" disabled><label for="s13" class="m-0">Disable</label>
</div></div>
<div class="stat d-flex overflow-hidden flex-shrink-0">
<button class="w5">CPlane</button><span class="w1">x 39.762</span><span class="w1">y 13.116</span><span class="w1">z 0.000</span><button class="w1">Meters</button>
<button class="w2 d-flex align-items-center"><svg width="24" height="26" class="ms-1 me-1"><path d="M0 0h24v26H0z"/></svg>valley - Copy</button>
<button class="w3 lit">Grid Snap</button><button class="w4">Ortho</button><button class="w4">Planar</button><button class="w5 lit">Osnap</button><button class="w6">SmartTrack</button><button class="w7 lit">Gumball</button><button class="w8">Record History</button><button class="w9">Filter</button>
</div>
</main>

<!-- node editor window -->
<aside class="rhs d-flex flex-column overflow-hidden">
<div class="rib">
<div class="rtabs d-flex">
<button class="on">Params</button><button>Maths</button><button>Sets</button><button>Vector</button><button>Curve</button><button>Surface</button><button>Mesh</button><button>Intersect</button><button>Transform</button><button>Display</button><button>Wb</button><button>Kangaroo2</button><button class="flex-grow-1 text-start">Emu</button>
</div>
<div class="rbody d-flex">
<div class="grp"><div class="cells d-flex">
<div class="d-grid gap-2 align-content-start"><svg viewBox="0 0 60 60"><use href="#hex"/><path d="M22 20L37 38M37 20L22 38" stroke="#fff" stroke-width="7"/></svg><svg viewBox="0 0 60 60"><use href="#hex"/><path d="M18 42L34 24" stroke="#fff" stroke-width="7"/><path d="M26 18L44 14L42 32z" fill="#fff"/></svg></div><div class="rule"></div>
<div class="d-grid gap-2 align-content-start"><svg viewBox="0 0 60 60"><use href="#hex"/><circle cx="30" cy="29" r="16" fill="none" stroke="#fff" stroke-width="4"/></svg><svg viewBox="0 0 60 60"><use href="#hex"/><path d="M16 18Q38 24 41 46" fill="none" stroke="#fff" stroke-width="3"/><path d="M14 27L17 15L28 20M33 46h14" fill="none" stroke="#fff" stroke-width="3"/></svg></div>
<div class="d-grid gap-2 align-content-start"><svg viewBox="0 0 60 60"><use href="#hex"/><g fill="none" stroke="#eee" stroke-width="3" transform="rotate(-50 30 29)"><ellipse cx="30" cy="29" rx="23" ry="13"/><ellipse cx="30" cy="29" rx="14" ry="7" stroke="#aaa"/><ellipse cx="30" cy="29" rx="6" ry="2" stroke="#aaa"/></g></svg><svg viewBox="0 0 60 60"><use href="#lineic"/></svg></div>
<div class="d-grid gap-2 align-content-start"><svg viewBox="0 0 60 60"><use href="#hex"/><path d="M14 22L40 12L51 29L17 45z" fill="#999" stroke="#fff" stroke-width="3"/><path d="M20 38L25 22L37 20" fill="none" stroke="#ddd" stroke-width="2"/></svg><svg viewBox="0 0 60 60"><use href="#hex"/><path d="M16 10L30 26M44 10L30 26M16 48L30 34M44 48L30 34" stroke="#777" stroke-width="2"/><path d="M29 13L44 30L29 45L14 30z" fill="#222" stroke="#fff" stroke-width="3"/><path d="M20 7L29 16L39 7M20 51L29 42L39 51" fill="none" stroke="#888" stroke-width="2"/></svg></div><div class="rule"></div>
<div class="d-grid gap-2 align-content-start"><svg viewBox="0 0 60 60"><use href="#hex"/><path d="M15 20L30 12L44 16V38L33 46L15 42z" fill="#bbb" stroke="#eee" stroke-width="2"/><path d="M33 22L44 16V38L33 46z" fill="#666"/></svg><svg viewBox="0 0 60 60"><use href="#hex"/><path d="M29 10Q40 12 48 26V32L30 47Q16 44 12 29z" fill="url(#gMet)" stroke="#eee" stroke-width="2"/><ellipse cx="38" cy="20" rx="6" ry="10" transform="rotate(-40 38 20)" fill="#777" stroke="#fff" stroke-width="2"/></svg></div>
<div class="d-grid gap-2 align-content-start"><svg viewBox="0 0 60 60"><use href="#hex"/><path d="M15 20H45M15 30H45M17 40H43M20 12V46M30 8V50M40 12V46M15 20L35 42M22 10L45 36M45 20L25 42M38 10L15 34" stroke="#ccc" stroke-width="2"/></svg><svg viewBox="0 0 60 60"><use href="#hex"/><path d="M20 12H42V47Q28 38 12 41Q22 30 20 12z" fill="#999" stroke="#eee" stroke-width="3"/><path d="M31 12Q32 30 28 40M18 27H42" stroke="#eee" stroke-width="2" fill="none"/></svg></div>
</div><div class="foot text-center pe-4">Geometry<svg><use href="#dn"/></svg></div></div>

<div class="grp"><div class="cells d-flex">
<div class="d-grid gap-2 align-content-start"><svg><use href="#boolic"/></svg><svg viewBox="0 0 60 60"><use href="#hex"/><path d="M18 24V15H41Q29 28 29 44" fill="none" stroke="#fff" stroke-width="5"/></svg></div>
<div class="d-grid gap-2 align-content-start"><svg viewBox="0 0 60 60"><use href="#hex"/><ellipse cx="21" cy="30" rx="7" ry="14" fill="none" stroke="#ddd" stroke-width="5"/><path d="M34 42v4M44 46V15L38 19M39 45h10" fill="none" stroke="#ddd" stroke-width="5"/></svg><svg viewBox="0 0 60 60"><use href="#hex"/><path d="M17 43L30 12L42 43M22 33H38" fill="none" stroke="#fff" stroke-width="5"/><path d="M12 43H24M34 43H48" stroke="#fff" stroke-width="4"/></svg></div>
</div><div class="foot ps-2 ms-1">Primitive<svg><use href="#dn"/></svg></div></div>

<div class="grp"><div class="cells d-flex">
<div class="d-grid gap-2 align-content-start"><svg><use href="#slider"/></svg><svg viewBox="0 0 60 60"><rect x="1" y="1" width="58" height="58" rx="6" fill="#ffc845" stroke="#333" stroke-width="2"/><path d="M4 36H56V56H4z" fill="#ffe84a"/><path d="M8 40L12 50L18 36L22 48L24 26L34 46L32 20L42 40Q52 36 48 20" fill="none" stroke="#b4691e" stroke-width="4"/></svg></div><div class="rule"></div>
<div class="d-grid gap-2 align-content-start"><svg viewBox="0 0 60 60"><use href="#boxm"/><path d="M17 7H43V52H17z" fill="#111"/><path d="M20 9H40V29H20z" fill="#c8c8c8"/></svg><svg viewBox="0 0 60 60"><circle cx="30" cy="30" r="28" fill="url(#gMet)" stroke="#444" stroke-width="2"/><path d="M59 30L48 38A20 20 0 1 1 48 22z" fill="#2a2a2a" stroke="#777" stroke-width="2"/></svg></div>
<div class="d-grid gap-2 align-content-start"><svg viewBox="0 0 60 60"><rect x="1" y="1" width="58" height="58" rx="6" fill="url(#gMet)" stroke="#222" stroke-width="2"/><path d="M24 3L18 12H42M34 4L28 24" fill="none" stroke="#777" stroke-width="5"/><path d="M42 32H26L22 42H30Q40 44 36 58" fill="none" stroke="#222" stroke-width="6"/></svg><svg><use href="#vlist"/></svg></div><div class="rule"></div>
<div class="d-grid gap-2 align-content-start"><svg viewBox="0 0 60 60"><rect x="1" y="1" width="58" height="58" rx="6" fill="url(#gPink)" stroke="#222" stroke-width="2"/><path d="M2 38H58V52Q58 58 52 58H8Q2 58 2 52z" fill="#ff4da0"/><path d="M2 38H58" stroke="#7b1040" stroke-width="2"/><circle cx="4" cy="38" r="5" fill="#fff" stroke="#222" stroke-width="2"/><circle cx="41" cy="38" r="5" fill="#fff" stroke="#222" stroke-width="2"/></svg><svg viewBox="0 0 60 60"><rect x="1" y="1" width="58" height="58" rx="6" fill="#7fe84e"/><path d="M3 3H15V16H3zM45 3H57V16H45z" fill="#d8ffb0"/><path d="M30 3H45V16H30zM3 16H15V30H3z" fill="#6fbf3f"/><path d="M15 16H30V30H15zM45 30H57V44H45z" fill="#a6ff5e"/><path d="M15 30H30V44H15zM30 16H45V30H30z" fill="#3c8a1e"/><path d="M15 44H30V57H15z" fill="#123a08"/><path d="M45 44H57V57H45z" fill="#7fffd0"/><rect x="1" y="1" width="58" height="58" rx="6" fill="none" stroke="#222" stroke-width="2"/></svg></div>
</div><div class="foot text-center pe-4">Input<svg><use href="#dn"/></svg></div></div>

<div class="grp"><div class="cells d-flex">
<div class="d-grid gap-2 align-content-start"><svg viewBox="0 0 60 60"><path d="M38 10Q36 24 18 34M38 8Q44 22 43 38" fill="none" stroke="#5a2a1c" stroke-width="3"/><path d="M38 4Q22 2 12 22Q32 24 38 4z" fill="#46a122" stroke="#215c0e"/><circle cx="15" cy="38" r="11" fill="#dd281d" stroke="#8b0f0a"/><circle cx="41" cy="44" r="11" fill="#dd281d" stroke="#8b0f0a"/><circle cx="12" cy="34" r="3" fill="#ff9d92"/><circle cx="38" cy="40" r="3" fill="#ff9d92"/></svg><svg viewBox="0 0 60 60"><use href="#boxm"/><path d="M3 52H57V57H3z"/><path d="M26 54L28 36H33L35 54z"/><path d="M30 40L18 28L8 26M30 36V20L24 8M30 38L43 27L53 26M20 30L12 18L8 16M18 28L20 14L16 7M42 28L46 16L52 13M42 28L38 15L43 7M30 24L36 10M30 26L26 18L28 9M14 22L22 12M46 22L38 12M10 24L18 20M50 24L42 20" fill="none" stroke="#111" stroke-width="3"/></svg></div><div class="rule"></div>
<div class="d-grid gap-2 align-content-start"><svg viewBox="0 0 60 60"><path d="M5 20H25V8L55 29L25 50V39H5L8 30z" fill="#444" stroke="#222" stroke-width="3"/></svg><svg viewBox="0 0 60 60"><path d="M5 20H25V8L55 29L25 50V39H5L8 30z" fill="url(#gPaper)" stroke="#555" stroke-width="3"/></svg></div><div class="rule"></div>
<div class="d-grid gap-2 align-content-start"><svg viewBox="0 0 60 60"><ellipse cx="25" cy="25" rx="17" ry="20" transform="rotate(20 25 25)" fill="url(#gPaper)" stroke="#777" stroke-width="2"/><circle cx="22" cy="27" r="5" fill="#444"/><ellipse cx="40" cy="37" rx="15" ry="17" transform="rotate(20 40 37)" fill="#e0307f" stroke="#8b1147" stroke-width="2"/><circle cx="36" cy="37" r="5" fill="#7a0c3c"/><path d="M43 26q8 4 8 10" stroke="#ffb0d2" stroke-width="3" fill="none"/></svg><svg viewBox="0 0 60 60"><path d="M24 4H36M26 5V22L11 50Q11 55 16 55H44Q49 55 49 50L34 22V5" fill="#f6eef2" stroke="#6a2345" stroke-width="2"/><path d="M22 30H38L48 51Q47 54 44 54H16Q12 54 12 51z" fill="#da2f76"/><path d="M22 30H38L40 36H20z" fill="#ff86b0"/></svg></div>
</div><div class="foot text-center pe-4">Util<svg><use href="#dn"/></svg></div></div>
</div></div>

<div class="bar d-flex align-items-center flex-shrink-0 ps-1">
<button class="me-1" aria-label="Open file"><svg viewBox="0 0 60 60"><path d="M8 6L12 3H26L29 7H44V36H8z" fill="#e4e4e4" stroke="#666" stroke-width="2"/><path d="M3 30H12L20 23H49V56H3z" fill="#66b32e" stroke="#2d6b12" stroke-width="2"/><path d="M5 32H13L21 25H47V30H5z" fill="#9fe06a"/></svg></button>
<button aria-label="Save file"><svg viewBox="0 0 60 60"><path d="M3 2H57V57H8L3 53z" fill="#2a66e8" stroke="#10287a" stroke-width="3"/><path d="M12 3H48V27H12z" fill="#e4e4e4"/><path d="M16 9H44M16 15H44" stroke="#bbb" stroke-width="2"/><path d="M15 36H41V56H15z" fill="#bbb" stroke="#223" stroke-width="2"/><path d="M19 40H28V54H19z" fill="#1d4fd0"/></svg></button>
<div class="rule mx-1 ms-2"></div>
<div class="position-relative pickzoom"><select aria-label="Zoom level"><option>158%</option></select><svg viewBox="0 0 20 13"><path d="M2 2L10 11L18 2" fill="none" stroke="#555" stroke-width="2"/></svg></div>
<button class="ms-1" aria-label="Zoom extents"><svg viewBox="0 0 60 60"><path d="M6 22V6H22M38 6H54V22M54 38V54H38M22 54H6V38" fill="none" stroke="#222" stroke-width="7"/><path d="M24 23L36 36M36 23L24 36" stroke="#111" stroke-width="5"/></svg></button>
<button class="drop ms-2 me-3" aria-label="Views"></button>
<button class="me-2" aria-label="Preview"><svg viewBox="0 0 60 60"><path d="M2 30Q28-4 58 30Q30 62 2 30z" fill="#e6eef2" stroke="#222" stroke-width="3"/><circle cx="30" cy="30" r="16" fill="#4ab4ee" stroke="#1b5d8c" stroke-width="2"/><circle cx="30" cy="29" r="8" fill="#071018"/><circle cx="34" cy="24" r="3" fill="#fff"/></svg></button>
<button class="drop me-2" aria-label="Preview options"></button>
<button aria-label="Sketch"><svg viewBox="0 0 60 60"><path d="M8 13Q18 20 10 36Q2 56 20 54" fill="none" stroke="#5b1712" stroke-width="4"/><path d="M26 34L52 2L57 10L55 30L38 46z" fill="#ee4238" stroke="#d83a30"/><path d="M26 34L38 46L20 56z" fill="#e2b04c"/><path d="M22 48L28 52L18 58z"/></svg></button>
<div class="ms-auto d-flex align-items-center pe-2 gap-1">
<button aria-label="Shadow preview"><svg viewBox="0 0 60 60"><ellipse cx="31" cy="46" rx="22" ry="13" fill="#eee" stroke="#333" stroke-width="3"/><ellipse cx="31" cy="40" rx="20" ry="12" fill="#2c2c2c"/><path d="M22 4Q34-2 50 20L48 30Q30 38 12 26z" fill="url(#gPaper)" stroke="#888" stroke-width="2"/><ellipse cx="40" cy="17" rx="6" ry="9" transform="rotate(-38 40 17)" fill="#bbb" stroke="#999"/></svg></button>
<button aria-label="Wire preview"><svg viewBox="0 0 60 60"><use href="#cyl" fill="#fff"/><ellipse cx="20" cy="42" rx="9" ry="15" transform="rotate(-38 20 42)" fill="none" stroke="#444" stroke-width="2"/></svg></button>
<button class="sel" aria-label="Shaded preview"><svg viewBox="0 0 60 60"><use href="#cyl" fill="url(#gRed)"/></svg></button>
<div class="rule mx-1"></div>
<button aria-label="Selected preview"><svg viewBox="0 0 60 60"><path d="M4 32L14 20L44 50L34 57Q16 56 4 32z" fill="#e2e2e2" stroke="#888" stroke-width="2"/><path d="M16 16Q24 2 40 4L57 24V36L46 48z" fill="url(#gGrn)" stroke="#1e5208" stroke-width="2"/><ellipse cx="42" cy="20" rx="8" ry="11" transform="rotate(-38 42 20)" fill="#3a7d18"/><path d="M6 10L50 56" stroke="#222" stroke-width="3"/></svg></button>
<button aria-label="Document preview"><svg viewBox="0 0 60 60"><ellipse cx="30" cy="52" rx="25" ry="6" fill="#ccc"/><circle cx="30" cy="28" r="25" fill="#e6e6e6" stroke="#444" stroke-width="2"/><path d="M30 3A25 25 0 0 0 30 53z" fill="url(#gHalf)" stroke="#7a2a08" stroke-width="2"/></svg></button>
<div class="rule"></div>
<button aria-label="Mesh quality"><svg viewBox="0 0 60 60"><circle cx="31" cy="31" r="23" fill="url(#gSky)" stroke="#1c2a78" stroke-width="2"/></svg></button>
<button class="drop" aria-label="Quality options"></button>
</div></div>

<div class="canvas flex-grow-1 position-relative overflow-hidden">
<svg width="100%" height="100%" viewBox="1670 346 1672 1472" preserveAspectRatio="xMinYMin slice">
<path d="M1745 346V1822M1982 346V1822M2219 346V1822M2456 346V1822M2694 346V1822M2931 346V1822M3168 346V1822M1669 390H3344M1669 469H3344M1669 549H3344M1669 628H3344M1669 707H3344M1669 786H3344M1669 865H3344M1669 945H3344M1669 1024H3344M1669 1103H3344M1669 1182H3344M1669 1261H3344M1669 1341H3344M1669 1420H3344M1669 1499H3344M1669 1578H3344M1669 1657H3344M1669 1736H3344M1669 1815H3344" stroke="#b6b2ac" stroke-width="2"/>
<g fill="#f8f8f6" fill-opacity=".7" stroke="#8c8c88" stroke-opacity=".6" stroke-width="2"><path d="M1679 864H3334V1231H1679z"/><path d="M1703 1262H2071V1489H1703z"/><path d="M3136 986H3248V1056H3136z"/></g>
<g fill="#8cf2f1" stroke="#7cc" stroke-width="2"><path d="M1721 996H1832V1066H1721zM1719 1111H1830V1182H1719z"/></g>
<path class="thin" d="M1669 1031H1730M1669 1148L1728 1146M1820 1031C1860 1033 1862 1050 1872 1056M1872 1088C1850 1125 1830 1145 1797 1166C1750 1215 1690 1255 1669 1303M1820 1146C1885 1148 1890 1200 1800 1270C1720 1350 1665 1370 1670 1420C1674 1436 1700 1439 1716 1439M1820 1146C1895 1150 1910 1205 1895 1250L1872 1322M1901 1134C1880 1210 1848 1250 1849 1322M1669 1344C1684 1353 1700 1355 1714 1355M1881 1362C1895 1369 1915 1371 1932 1371M1883 1446C1897 1453 1917 1455 1934 1455M1857 1390V1404M3236 1021C3290 1022 3310 1018 3344 1013"/>
<path class="wire" d="M1820 1031C1845 1034 1845 1048 1868 1050M1820 1146C1862 1144 1832 1090 1868 1083M2068 1060H2090M2302 1060H2325M2536 1027H2560M2848 1027C2980 1026 3010 1021 3148 1021M2848 1027C2905 1035 2815 1120 2868 1127M2830 1159H2866M2828 1200C2846 1200 2848 1190 2866 1190M3086 1159C3105 1160 3110 1164 3130 1164M1884 1339H1935M1886 1423H1937"/>
<g class="port"><circle cx="1737" cy="1031" r="6"/><circle cx="1816" cy="1031" r="6"/><circle cx="1735" cy="1146" r="6"/><circle cx="1815" cy="1146" r="6"/><circle cx="1871" cy="1050" r="6"/><circle cx="1871" cy="1083" r="6"/><circle cx="1871" cy="1115" r="6"/><circle cx="2064" cy="1060" r="6"/><circle cx="2064" cy="1107" r="6"/><circle cx="2094" cy="1060" r="6"/><circle cx="2298" cy="1060" r="6"/><circle cx="2329" cy="1060" r="6"/><circle cx="2533" cy="1027" r="6"/><circle cx="2533" cy="1060" r="6"/><circle cx="2533" cy="1091" r="6"/><circle cx="2563" cy="1027" r="6"/><circle cx="2563" cy="1060" r="6"/><circle cx="2844" cy="1027" r="6"/><circle cx="2844" cy="1060" r="6"/><circle cx="2870" cy="1127" r="6"/><circle cx="2870" cy="1159" r="6"/><circle cx="2870" cy="1190" r="6"/><circle cx="3083" cy="1159" r="6"/><circle cx="2639" cy="1159" r="6"/><circle cx="2827" cy="1159" r="6"/><circle cx="2637" cy="1200" r="6"/><circle cx="2825" cy="1200" r="6"/><circle cx="3133" cy="1164" r="6"/><circle cx="3317" cy="1164" r="6"/><circle cx="3152" cy="1021" r="6"/><circle cx="3232" cy="1021" r="6"/><circle cx="1719" cy="1355" r="6"/><circle cx="1881" cy="1339" r="6"/><circle cx="1881" cy="1371" r="6"/><circle cx="1938" cy="1339" r="6"/><circle cx="1938" cy="1371" r="6"/><circle cx="1721" cy="1439" r="6"/><circle cx="1883" cy="1423" r="6"/><circle cx="1883" cy="1455" r="6"/><circle cx="1940" cy="1423" r="6"/><circle cx="1940" cy="1455" r="6"/></g>
<g class="pale"><rect x="1737" y="1012" width="79" height="38" rx="4"/><rect x="1735" y="1127" width="80" height="38" rx="4"/><path id="torn" d="M1942 1320H2053L2059 1327L2053 1334L2059 1341L2053 1348L2059 1355L2053 1362L2059 1369L2053 1376L2059 1383L2058 1390H1942Q1938 1390 1938 1386V1324Q1938 1320 1942 1320z"/><use href="#torn" x="2" y="84"/></g>
<g class="comp"><rect x="1871" y="1032" width="193" height="102" rx="4"/><rect x="2094" y="1037" width="204" height="45" rx="4"/><rect x="2329" y="1008" width="204" height="102" rx="4"/><rect x="2563" y="1008" width="281" height="71" rx="4"/><rect x="2870" y="1108" width="213" height="102" rx="4"/><rect x="3152" y="1002" width="80" height="39" rx="4"/><rect x="1719" y="1320" width="162" height="70" rx="4"/><rect x="1721" y="1404" width="162" height="70" rx="4"/></g>
<g class="memo"><rect x="2639" y="1141" width="188" height="36" rx="4"/><rect x="2637" y="1184" width="188" height="32" rx="4"/><rect x="3133" y="1118" width="184" height="92" rx="4"/></g>
<g class="tag"><path d="M1714 959H1838V987H1784L1776 996L1768 987H1714z"/><path d="M1711 1075H1838V1102H1783L1775 1111L1767 1102H1711z"/><path d="M3098 950H3284V977H3200L3192 987L3184 977H3098z"/></g>
<use href="#lineic" x="1756" y="1012" width="38" height="38"/><use href="#lineic" x="1755" y="1127" width="38" height="38"/><use href="#boolic" x="3173" y="1002" width="38" height="38"/>
<path d="M1965 1091L1975 1072" stroke="#111" stroke-width="3"/><path d="M1970 1077L1976 1068L1979 1079z"/><path d="M1976 1078Q1981 1084 1981 1090" fill="none" stroke="#111" stroke-width="2"/><path d="M1966 1091H1980" stroke="#8d1712" stroke-width="5"/><path d="M1979 1085L1989 1091L1979 1097z" fill="#8d1712"/><circle cx="1965" cy="1091" r="3" fill="#fff" stroke="#222"/>
<g fill="#eee" stroke="#555" stroke-width="1.500"><rect x="2177" y="1045" width="27" height="27" rx="4"/><rect x="2416" y="1045" width="27" height="27" rx="4"/><rect x="2711" y="1029" width="26" height="27" rx="4"/><rect x="2875" y="1116" width="20" height="21" rx="3"/></g>
<path d="M2198 1053Q2192 1068 2186 1068Q2181 1067 2183 1060Q2187 1052 2193 1060Q2194 1068 2198 1067" fill="none" stroke="#111" stroke-width="3"/><circle cx="2200" cy="1049" r="2" fill="none" stroke="#111"/>
<path d="M2423 1049H2420V1068H2423M2436 1049H2439V1068H2436M2425 1054L2433 1064M2434 1053L2425 1065" fill="none" stroke="#111" stroke-width="2"/>
<path d="M2718 1039H2730M2718 1047H2730" stroke="#111" stroke-width="4"/><path d="M2885 1134V1122M2880 1126L2885 1120L2890 1126" fill="none" stroke="#666" stroke-width="2"/>
<circle cx="2987" cy="1159" r="12" fill="#1c1c1c"/><g fill="none" stroke="#2b2b2b" stroke-width="6"><circle cx="2987" cy="1153" r="8"/><circle cx="2981" cy="1162" r="8"/><circle cx="2993" cy="1162" r="8"/></g><path d="M2987 1157Q2994 1152 2990 1144M2984 1160Q2977 1158 2974 1165M2989 1161Q2988 1170 2996 1172" fill="none" stroke="#8a8a8a" stroke-width="1.500"/>
<use href="#curveic" x="1784" y="1339" width="34" height="30"/><use href="#curveic" x="1784" y="1423" width="34" height="30"/><use href="#vecic" x="2014" y="1337" width="34" height="36"/><use href="#vecic" x="2016" y="1421" width="34" height="36"/>
<text class="ari big" x="1701" y="916">4. sense (tension or compression)</text>
<text class="ari emph mid wide" x="2440" y="996">if 0 degree same direction and if 180 degree opposite direction</text>
<text class="ari emph" x="2878" y="902">False = compression</text><text class="ari emph" x="2878" y="927">True = tension</text>
<text class="ari" x="1741" y="1302">display edge orientation</text>
<g class="seg"><text class="mid" x="1776" y="978">left edge form</text><text class="mid" x="1775" y="1094">left edge force</text><text class="mid s17" x="3191" y="968">tension / compression</text>
<text class="end" x="1948" y="1056">Vector A</text><text class="end" x="1948" y="1088">Vector B</text><text class="end" x="1948" y="1120">Plane</text><text x="2001" y="1064">Angle</text><text x="2001" y="1111">Reflex</text>
<text x="2105" y="1064">Radians</text><text x="2218" y="1064">Degrees</text><text x="2339" y="1064">Number</text><text x="2456" y="1032">Nearest</text><text x="2456" y="1064">Floor</text><text x="2456" y="1096">Ceiling</text>
<text class="end" x="2698" y="1032">First Number</text><text class="end" x="2698" y="1064">Second Number</text><text x="2751" y="1032">Equality</text><text x="2751" y="1064">Inequality</text>
<text x="2905" y="1132">Pattern</text><text class="end" x="2961" y="1163">0</text><text class="end" x="2961" y="1195">1</text><text x="3014" y="1163">Weave</text>
<text x="1730" y="1360">Curve</text><text x="1828" y="1344">Start</text><text x="1828" y="1376">End</text><text class="end" x="2004" y="1344">Anchor</text><text class="end" x="2004" y="1376">Vector</text>
<text x="1732" y="1444">Curve</text><text x="1830" y="1428">Start</text><text x="1830" y="1460">End</text><text class="end" x="2006" y="1428">Anchor</text><text class="end" x="2006" y="1460">Vector</text></g>
<g class="mono"><text class="mid" x="2725" y="1162">compression</text><text class="mid" x="2724" y="1203">tension</text><text x="3136" y="1134">compression</text></g>
<g><path d="M3222 1775A56 56 0 0 1 3232 1702Q3240 1692 3250 1693Q3262 1684 3268 1690" fill="none" stroke="#000" stroke-width="11" stroke-linecap="round"/><path d="M3288 1698Q3296 1694 3300 1702M3316 1724A58 58 0 0 1 3298 1788" fill="none" stroke="#000" stroke-width="11" stroke-linecap="round"/><path d="M3190 1726L3207 1720L3213 1731L3203 1739z"/>
<circle cx="3267" cy="1745" r="51" fill="#333"/><circle cx="3267" cy="1745" r="47" fill="url(#gDial)" stroke="#fff" stroke-width="2"/><path d="M3271 1698L3286 1701L3275 1713zM3221 1741L3224 1726L3236 1736zM3314 1748L3310 1763L3299 1753zM3264 1792L3249 1788L3260 1776z" fill="#fff"/></g>
</svg>
<div class="dock d-flex align-items-center">
<button aria-label="Number remote"><svg viewBox="0 0 60 60"><path d="M5 40V22L14 40V22" fill="none" stroke="#111" stroke-width="3"/><path d="M22 4H36V56H22z" fill="#7be83a" stroke="#2c6b10" stroke-width="2"/><path d="M22 26H44V18L56 30L44 40V34H22z" fill="#e5322a" stroke="#8c0f0c"/></svg></button>
<button aria-label="Metahopper"><svg viewBox="0 0 60 60"><path d="M31 56V34M18 56H42" stroke="#444" stroke-width="5"/><g fill="none" stroke-width="6" stroke-linecap="round"><path d="M31 34Q26 14 6 26M31 34Q36 14 54 24" stroke="#e8882c"/><path d="M31 34Q22 26 8 42M31 34Q42 26 52 42" stroke="#e8702c"/><path d="M31 32Q26 14 14 12M31 32Q36 14 52 10M30 30L28 6M31 30L40 8" stroke="#d8452a" stroke-width="5"/></g><circle cx="31" cy="34" r="5" fill="#e5322a"/></svg></button>
<button aria-label="Number slider"><svg><use href="#slider"/></svg></button><button aria-label="Value list"><svg><use href="#vlist"/></svg></button>
<button aria-label="Line"><svg viewBox="0 0 60 60"><path d="M14 46L44 12" stroke="#111" stroke-width="5"/><circle cx="13" cy="47" r="4" fill="#fff" stroke="#222" stroke-width="2"/><circle cx="46" cy="10" r="4" fill="#fff" stroke="#222" stroke-width="2"/></svg></button>
<div class="hold align-self-stretch"></div>
</div>
</div>
<div class="foots d-flex align-items-center flex-shrink-0 ps-1">
<svg width="42" height="42" viewBox="0 0 42 42"><circle cx="21" cy="21" r="19" fill="url(#gInfo)" stroke="#152a8c" stroke-width="2"/><path d="M17 6h8v18h-8zM17 28h8v7h-8z" fill="#1753b8" stroke="#fff" stroke-width="2"/></svg>
<span class="ms-1 ps-1">Autosave complete (19 seconds ago)</span><span class="ms-auto text-secondary pe-5 me-4">1.0.0007</span>
<svg class="align-self-end ms-1" width="14" height="14" viewBox="0 0 14 14"><path d="M9 1h2v2h-2zM9 5h2v2h-2zM5 5h2v2h-2zM9 9h2v2h-2zM5 9h2v2h-2zM1 9h2v2h-2z" fill="#888"/></svg>
</div>
</aside>
<div class="desk"></div>
</body>
</html>
